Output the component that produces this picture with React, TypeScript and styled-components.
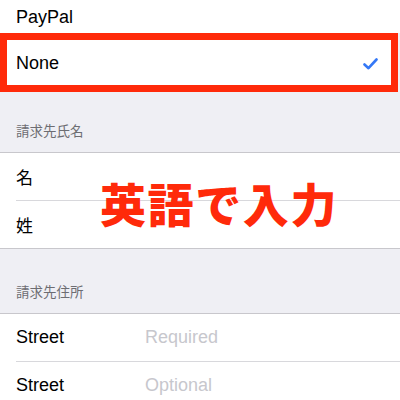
import React from 'react';
import styled, {createGlobalStyle} from 'styled-components';

const GlobalStyle = createGlobalStyle`
  html, body {
    margin: 0;
    padding: 0;
    background: #efeff4;
  }
  body {
    font-family: "Liberation Sans", "Noto Sans CJK JP", sans-serif;
    -webkit-font-smoothing: antialiased;
  }
`;

const Page = styled.div`
  width: 400px;
  height: 400px;
  overflow: hidden;
  background: #efeff4;
  position: relative;
`;

const TopCell = styled.div`
  height: 33px;
  background: #ffffff;
  display: flex;
  align-items: center;
  padding: 1px 0 0 16px;
  box-sizing: border-box;
  font-size: 18px;
  color: #000;
`;

// 注目させたい行を赤枠で囲む
const Highlight = styled.div`
  box-sizing: border-box;
  width: 398px;
  height: 59px;
  border: 7px solid #ff2a0a;
  background: #ffffff;
  display: flex;
  align-items: center;
  justify-content: space-between;
  padding: 2px 13px 0 9px;
  font-size: 18px;
  color: #000;
`;

const SectionHeader = styled.div<{h: number}>`
  box-sizing: border-box;
  height: ${p => p.h}px;
  display: flex;
  align-items: flex-end;
  padding: 0 0 14px 16px;
  font-family: "Noto Sans CJK JP", sans-serif;
  font-size: 13.5px;
  line-height: 16px;
  color: #6d6d72;
`;

const Group = styled.div`
  background: #ffffff;
  border-top: 1px solid #c8c7cc;
  border-bottom: 1px solid #c8c7cc;
`;

const Row = styled.div`
  height: 47px;
  margin-left: 16px;
  display: flex;
  align-items: center;
  font-size: 18px;
  color: #000;

  & + & {
    border-top: 1px solid #d8d8dc;
  }
`;

const Label = styled.span<{jp?: boolean}>`
  min-width: 129px;
  font-family: ${p => (p.jp ? '"Noto Sans CJK JP", sans-serif' : '"Liberation Sans", sans-serif')};
  font-size: ${p => (p.jp ? '17px' : '18px')};
`;

const Placeholder = styled.span`
  color: #c7c7cd;
`;

const Callout = styled.div`
  position: absolute;
  left: 100px;
  top: 172px;
  font-family: "Noto Sans CJK JP", sans-serif;
  font-weight: 900;
  font-size: 46px;
  line-height: 60px;
  letter-spacing: 1.6px;
  color: #ff2a0a;
  white-space: nowrap;
`;

const Check = () => (
  <svg width="15" height="12" viewBox="0 0 15 12">
    <polyline points="1.5,6.5 5.5,10.2 13.5,1.5" fill="none" stroke="#3478f6" strokeWidth="2.6" strokeLinecap="round" strokeLinejoin="round" />
  </svg>
);

const App = (): JSX.Element => {
  return (
    <Page>
      <GlobalStyle />
      <TopCell>PayPal</TopCell>
      <Highlight>
        <span>None</span>
        <Check />
      </Highlight>

      <SectionHeader h={60}>請求先氏名</SectionHeader>
      <Group>
        <Row><Label jp>名</Label></Row>
        <Row><Label jp>姓</Label></Row>
      </Group>

      <SectionHeader h={64}>請求先住所</SectionHeader>
      <Group>
        <Row>
          <Label>Street</Label>
          <Placeholder>Required</Placeholder>
        </Row>
        <Row>
          <Label>Street</Label>
          <Placeholder>Optional</Placeholder>
        </Row>
      </Group>

      <Callout>英語で入力</Callout>
    </Page>
  );
};

export default App;
